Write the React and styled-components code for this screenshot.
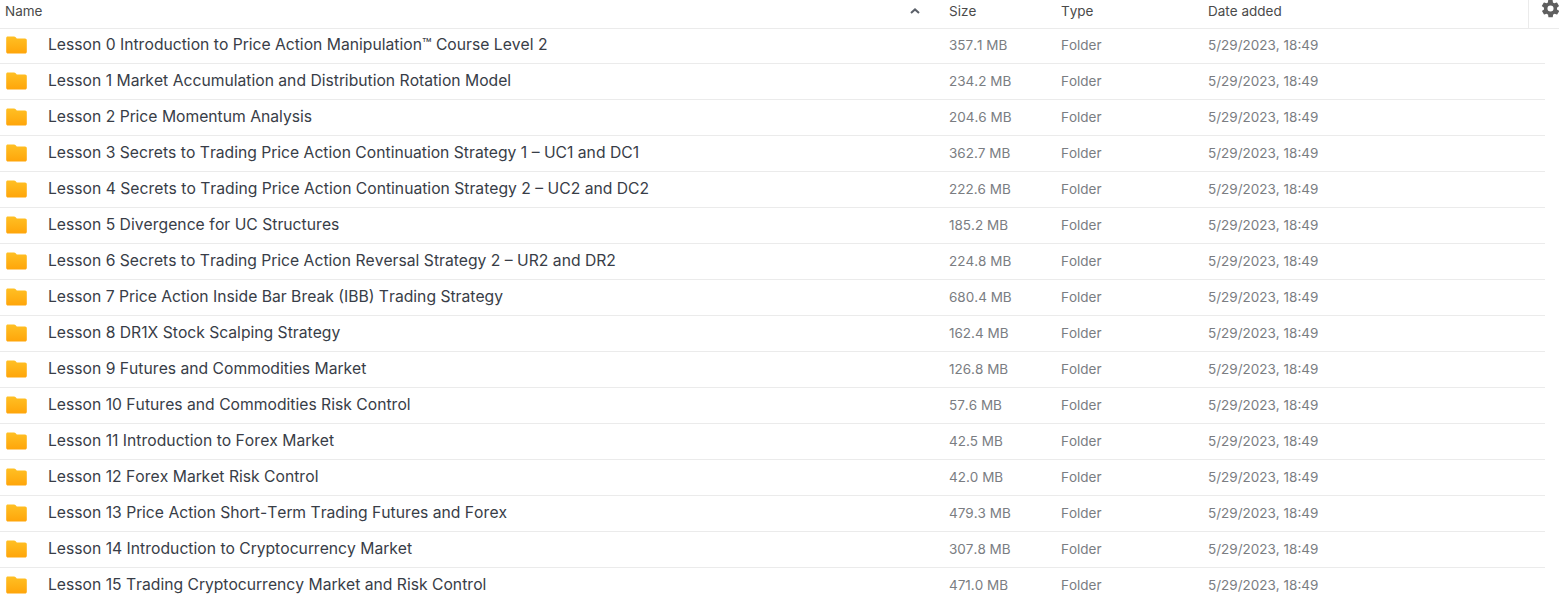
import styled, { createGlobalStyle } from 'styled-components';

const GlobalStyle = createGlobalStyle`
  html, body {
    margin: 0;
    padding: 0;
    background: #fff;
    overflow: hidden;
  }
`;

const lessons = [
  ['Lesson 0 Introduction to Price Action Manipulation™ Course Level 2', '357.1 MB'],
  ['Lesson 1 Market Accumulation and Distribution Rotation Model', '234.2 MB'],
  ['Lesson 2 Price Momentum Analysis', '204.6 MB'],
  ['Lesson 3 Secrets to Trading Price Action Continuation Strategy 1 – UC1 and DC1', '362.7 MB'],
  ['Lesson 4 Secrets to Trading Price Action Continuation Strategy 2 – UC2 and DC2', '222.6 MB'],
  ['Lesson 5 Divergence for UC Structures', '185.2 MB'],
  ['Lesson 6 Secrets to Trading Price Action Reversal Strategy 2 – UR2 and DR2', '224.8 MB'],
  ['Lesson 7 Price Action Inside Bar Break (IBB) Trading Strategy', '680.4 MB'],
  ['Lesson 8 DR1X Stock Scalping Strategy', '162.4 MB'],
  ['Lesson 9 Futures and Commodities Market', '126.8 MB'],
  ['Lesson 10 Futures and Commodities Risk Control', '57.6 MB'],
  ['Lesson 11 Introduction to Forex Market', '42.5 MB'],
  ['Lesson 12 Forex Market Risk Control', '42.0 MB'],
  ['Lesson 13 Price Action Short-Term Trading Futures and Forex', '479.3 MB'],
  ['Lesson 14 Introduction to Cryptocurrency Market', '307.8 MB'],
  ['Lesson 15 Trading Cryptocurrency Market and Risk Control', '471.0 MB'],
];

const Page = styled.div`
  width: 1559px;
  height: 596px;
  overflow: hidden;
  font-family: Inter, "Liberation Sans", sans-serif;
  font-kerning: none;
`;

const Header = styled.div`
  display: grid;
  grid-template-columns: 949px 112px 147px 320px 31px;
  height: 28px;
  border-bottom: 1px solid #ebebeb;
`;

const HeadCell = styled.div`
  display: flex;
  align-items: center;
  justify-content: space-between;
  height: 22px;
  padding-left: ${props => props.$indent || 0}px;
  font-size: 13.5px;
  color: #4a4a4a;
`;

const SortArrow = styled.svg`
  width: 10px;
  height: 6px;
  margin-right: 29px;
  margin-top: -1px;
`;

const SettingsCell = styled.div`
  display: flex;
  align-items: flex-start;
  padding-left: 11px;
  border-left: 1px solid #ebebeb;
`;

const Gear = styled.svg`
  width: 21px;
  height: 21px;
  margin-top: -2px;
  flex-shrink: 0;
`;

const List = styled.div`
  margin-top: -1px;
`;

const Row = styled.div`
  display: grid;
  grid-template-columns: 949px 112px 147px 1fr;
  align-items: center;
  width: 1545px;
  height: 35px;
  border-bottom: 1px solid #ebebeb;
`;

const NameCell = styled.div`
  display: flex;
  align-items: center;
  padding-left: 6px;
  color: #383d47;
  white-space: nowrap;
`;

const NameText = styled.span`
  font-size: 15.7px;
  margin-top: -2px;
`;

const FolderIcon = styled.svg`
  width: 21px;
  height: 18px;
  margin-top: -2px;
  margin-right: 21px;
  flex-shrink: 0;
`;

const InfoCell = styled.div`
  font-size: 13.5px;
  color: #7a7d82;
  margin-top: -1px;
`;

const Folder = ({ id }) => (
  <FolderIcon viewBox="0 0 21 18">
    <defs>
      <linearGradient id={id} x1="0" y1="0" x2="0" y2="1">
        <stop offset="0" stopColor="#ffc024" />
        <stop offset="1" stopColor="#ffa50a" />
      </linearGradient>
    </defs>
    <path
      d="M1.6 0.5 H8 C8.8 0.5 9.2 0.8 9.7 1.3 L10.8 2.4 H19 C20.1 2.4 20.8 3.1 20.8 4.2 V15.8 C20.8 16.9 20.1 17.6 19 17.6 H2 C0.9 17.6 0.2 16.9 0.2 15.8 V2 C0.2 1.1 0.8 0.5 1.6 0.5 Z"
      fill={`url(#${id})`}
    />
  </FolderIcon>
);

export default function App() {
  return (
    <Page>
      <GlobalStyle />
      <Header>
        <HeadCell $indent={5}>
          Name
          <SortArrow viewBox="0 0 10 6">
            <path d="M1 5 L5 1.4 L9 5" fill="none" stroke="#5b6069" strokeWidth="2" />
          </SortArrow>
        </HeadCell>
        <HeadCell>Size</HeadCell>
        <HeadCell>Type</HeadCell>
        <HeadCell>Date added</HeadCell>
        <SettingsCell>
          <Gear viewBox="0 0 24 24">
            <path
              fill="#5f5f5f"
              d="M19.4 13a7.6 7.6 0 0 0 0-2l2.1-1.6a.5.5 0 0 0 .1-.6l-2-3.5a.5.5 0 0 0-.6-.2l-2.5 1a7.4 7.4 0 0 0-1.7-1l-.4-2.7a.5.5 0 0 0-.5-.4h-4a.5.5 0 0 0-.5.4l-.4 2.7a7.4 7.4 0 0 0-1.7 1l-2.5-1a.5.5 0 0 0-.6.2l-2 3.5a.5.5 0 0 0 .1.6L4.6 11a7.6 7.6 0 0 0 0 2l-2.1 1.6a.5.5 0 0 0-.1.6l2 3.5c.1.2.4.3.6.2l2.5-1c.5.4 1.1.7 1.7 1l.4 2.7c0 .2.2.4.5.4h4c.3 0 .5-.2.5-.4l.4-2.7c.6-.3 1.2-.6 1.7-1l2.5 1c.2.1.5 0 .6-.2l2-3.5a.5.5 0 0 0-.1-.6L19.4 13zM12 15.5a3.5 3.5 0 1 1 0-7 3.5 3.5 0 0 1 0 7z"
            />
          </Gear>
        </SettingsCell>
      </Header>
      <List>
        {lessons.map(([name, size], i) => (
          <Row key={name}>
            <NameCell>
              <Folder id={`folder-${i}`} />
              <NameText>{name}</NameText>
            </NameCell>
            <InfoCell>{size}</InfoCell>
            <InfoCell>Folder</InfoCell>
            <InfoCell>5/29/2023, 18:49</InfoCell>
          </Row>
        ))}
      </List>
    </Page>
  );
}
